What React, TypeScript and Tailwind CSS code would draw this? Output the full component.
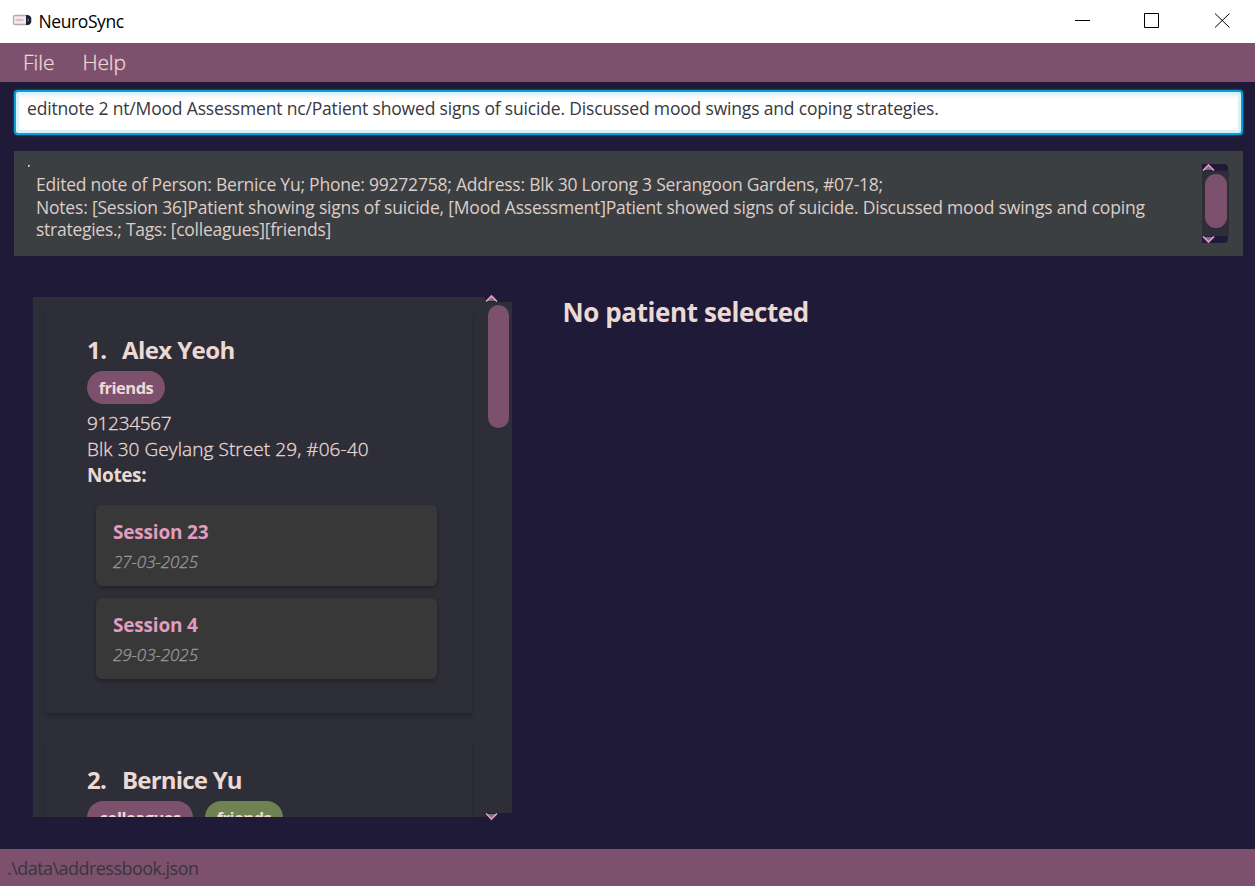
type Note = { title: string; date: string };
type Tag = { label: string; color: string };
type Contact = { phone: string; address: string; notes: Note[] };
type Person = { id: number; name: string; tracking: string; tags: Tag[]; contact?: Contact };

const people: Person[] = [
  {
    id: 1,
    name: "Alex Yeoh",
    tracking: "tracking-[-0.6px]",
    tags: [{ label: "friends", color: "w-[78px] bg-[#7d516e]" }],
    contact: {
      phone: "91234567",
      address: "Blk 30 Geylang Street 29, #06-40",
      notes: [
        { title: "Session 23", date: "27-03-2025" },
        { title: "Session 4", date: "29-03-2025" },
      ],
    },
  },
  {
    id: 2,
    name: "Bernice Yu",
    tracking: "tracking-[-0.8px]",
    tags: [
      { label: "colleagues", color: "w-[106px] bg-[#7d516e]" },
      { label: "friends", color: "w-[78px] bg-[#6f8352]" },
    ],
  },
];

function Arrow({ down = false }: { down?: boolean }) {
  return (
    <svg width="14" height="9" viewBox="0 0 14 9" className={down ? "block rotate-180" : "block"}>
      <path d="M1.500 8 6.500 3 11.500 8Z" fill="#8b8794" opacity="0.8" className={down ? "translate-x-px" : ""} />
      <path
        d="M1 8.500 6.500 3 12 8.500"
        fill="none"
        stroke="#e29cc0"
        strokeWidth="1.7"
        className={down ? "translate-x-px" : ""}
      />
    </svg>
  );
}

function TitleBar() {
  return (
    <header className="flex h-[43px] shrink-0 items-start bg-white text-black">
      <svg width="20" height="12" viewBox="0 0 20 12" className="mt-[14px] ml-3">
        <rect x="1.500" y="1.500" width="14.500" height="9" rx="1.200" fill="#fbe6ea" stroke="#a9adc0" strokeWidth="1.300" />
        <path d="M14 1h1.500a4 4 0 0 1 3.700 5 4 4 0 0 1-3.700 5H14Z" fill="#152238" />
        <path d="M15.500 4.500 17 5v2.200l-1.500.600Z" fill="#9a5a3c" />
        <path d="M3.500 6h8" stroke="#b59ba6" strokeWidth="1" />
      </svg>
      <span className="ml-[6.5px] text-[17.5px] leading-[43px] tracking-[-0.4px]">NeuroSync</span>
      <div className="ml-auto flex pt-[13px] pr-[25px]">
        <svg width="155" height="15" viewBox="0 0 155 15" fill="none" stroke="#000">
          <path d="M0 7.500h15M69.500.500h14v14h-14z" />
          <path d="m140 .500 14.500 14M154.500.500l-14.500 14" />
        </svg>
      </div>
    </header>
  );
}

function NoteBox({ note }: { note: Note }) {
  return (
    <div className="h-[81px] rounded-[6px] bg-[#383838] pt-[14px] pl-[17px] shadow-[0_2px_4px_rgba(0,0,0,0.3)]">
      <p className="text-[19px] leading-[26px] font-bold tracking-[-0.18px] text-[#e29cc0]">{note.title}</p>
      <p className="mt-[5px] text-[17px] leading-6 font-light tracking-[-0.05px] text-[#999] italic [-webkit-text-stroke:0.3px]">
        {note.date}
      </p>
    </div>
  );
}

function PersonCard({ person }: { person: Person }) {
  const { contact } = person;
  return (
    <article className="h-[402px] shrink-0 pt-[23px] pr-[35px] pl-[41px] shadow-[0_3px_4px_rgba(0,0,0,0.25)]">
      <h2 className={`flex text-[24px] leading-8 font-bold ${person.tracking}`}>
        <span className="w-[35px]">{person.id}.</span>
        <span>{person.name}</span>
      </h2>
      <div className="mt-[5px] flex gap-3">
        {person.tags.map((t) => (
          <span
            key={t.label}
            className={`h-[33px] rounded-full text-center text-[16.5px] leading-[33px] font-bold tracking-[-0.5px] ${t.color}`}
          >
            {t.label}
          </span>
        ))}
      </div>
      {contact && (
        <>
          <div className="mt-1.5 text-[19px] leading-[26px] whitespace-nowrap">
            <p className="font-light tracking-[-0.3px] [-webkit-text-stroke:0.3px]">{contact.phone}</p>
            <p className="font-light tracking-[0.08px] [-webkit-text-stroke:0.3px]">{contact.address}</p>
            <p className="font-bold tracking-[-0.4px]">Notes:</p>
          </div>
          <div className="mt-[17px] ml-[9px] flex flex-col gap-3">
            {contact.notes.map((n) => (
              <NoteBox key={n.title} note={n} />
            ))}
          </div>
        </>
      )}
    </article>
  );
}

export default function App() {
  return (
    <div className="flex h-[886px] w-[1255px] flex-col overflow-hidden bg-[#1f1a38] font-['Open_Sans','Noto_Sans',sans-serif] text-[#ecd9d4]">
      <TitleBar />
      <nav className="flex h-[39px] shrink-0 gap-7 bg-[#7d516e] pl-[23px] text-[21px] leading-[39px] font-light [-webkit-text-stroke:0.3px]">
        <span>File</span>
        <span className="tracking-[-0.2px]">Help</span>
      </nav>
      <main className="flex min-h-0 flex-1 flex-col pt-2">
        <div className="mr-3 ml-3.5 h-[45px] shrink-0 rounded-[4px] border-2 border-[#0aa0d6] bg-white pl-[11px] text-[17.5px] leading-[33px] tracking-[-0.173px] whitespace-nowrap text-[#38383d] shadow-[0_0_2px_#0aa0d6,inset_0_0_0_3px_#daf1f8,inset_0_6px_5px_-2px_#eee]">
          editnote 2 nt/Mood Assessment nc/Patient showed signs of suicide. Discussed mood swings and coping strategies.
        </div>
        <section className="mr-3 ml-3.5 mt-4 flex h-[105px] shrink-0 bg-[#3c3f41] pt-[13px]">
          <div className="mt-px ml-3.5 size-[2px] rounded-br-full bg-[#d8d8d8]" />
          <div className="mt-[9px] ml-1.5 text-[17.5px] leading-[22.7px] whitespace-nowrap text-[#dccdc8]">
            <p className="tracking-[-0.228px]">
              Edited note of Person: Bernice Yu; Phone: 99272758; Address: Blk 30 Lorong 3 Serangoon Gardens, #07-18;
            </p>
            <p className="tracking-[-0.192px]">
              Notes: [Session 36]Patient showing signs of suicide, [Mood Assessment]Patient showed signs of suicide. Discussed mood swings and coping
            </p>
            <p className="tracking-[-0.26px]">strategies.; Tags: [colleagues][friends]</p>
          </div>
          <div className="mr-3.5 ml-auto flex h-[79px] w-[27px] flex-col">
            <div className="mr-px flex h-[7px] items-end overflow-hidden rounded-tr-[4px] bg-[#1f1a38]">
              <Arrow />
            </div>
            <div className="h-[65px] bg-[#2e2e39] pt-[3px] pl-[3px]">
              <div className="h-[54px] w-[22px] rounded-full bg-[#7d516e]" />
            </div>
            <div className="mr-px flex h-[7px] items-start overflow-hidden rounded-br-[4px] bg-[#1f1a38]">
              <Arrow down />
            </div>
          </div>
        </section>
        <div className="mt-[38px] flex">
          <div className="mt-[3px] flex h-[520px] w-[452px] ml-[33px] flex-col gap-[28px] overflow-hidden bg-[#2e2e39] px-[13px] pt-[14px]">
            {people.map((p) => (
              <PersonCard key={p.id} person={p} />
            ))}
          </div>
          <div className="flex h-[530px] w-[27px] flex-col">
            <div className="flex h-2 shrink-0 items-end overflow-hidden">
              <Arrow />
            </div>
            <div className="h-[511px] shrink-0 bg-[#2e2e39] pt-[3px] pl-[3px]">
              <div className="h-[123px] w-[21px] rounded-full bg-[#7d516e]" />
            </div>
            <Arrow down />
          </div>
          <h1 className="ml-[50.5px] text-[26px] leading-9 font-bold tracking-[-0.4px]">No patient selected</h1>
        </div>
      </main>
      <footer className="h-[37px] shrink-0 bg-[#7d516e] pl-[7px] text-[18px] leading-[38px] tracking-[-0.54px] text-[#37373b]">
        .\data\addressbook.json
      </footer>
    </div>
  );
}
